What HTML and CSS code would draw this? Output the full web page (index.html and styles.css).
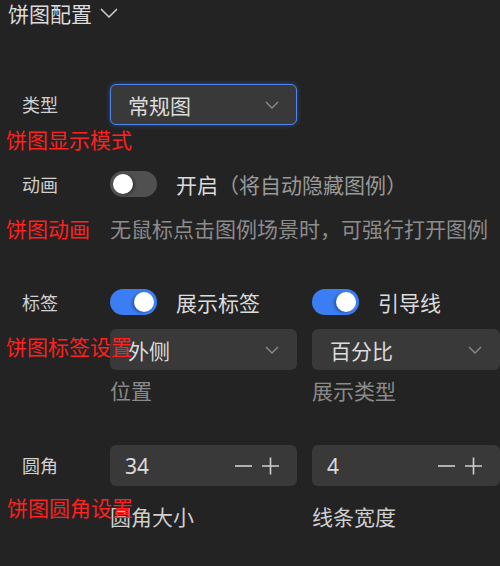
FILE: index.html
```html
<!DOCTYPE html>
<html lang="zh-CN">
<head>
<meta charset="utf-8">
<title>饼图配置</title>
<link rel="stylesheet" href="styles.css">
</head>
<body>
<div class="panel">
  <div class="header">
    <span class="title">饼图配置</span>
    <svg class="title-caret" width="18" height="10" viewBox="0 0 18 10"><path d="M1 1 L9 9 L17 1" fill="none" stroke="#cfcfcf" stroke-width="1.5"/></svg>
  </div>

  <div class="item item-type">
    <div class="label">类型</div>
    <div class="control">
      <div class="select select-focus">
        <span class="select-text">常规图</span>
        <svg class="caret" width="14" height="8" viewBox="0 0 14 8"><path d="M1 1 L7 7 L13 1" fill="none" stroke="#8a8a8a" stroke-width="1.4"/></svg>
      </div>
    </div>
    <div class="note note-type">饼图显示模式</div>
  </div>

  <div class="item item-anim">
    <div class="label">动画</div>
    <div class="control">
      <div class="switch-row">
        <span class="switch"><span class="knob"></span></span>
        <span class="switch-text">开启<span class="muted">（将自动隐藏图例）</span></span>
      </div>
      <div class="help">无鼠标点击图例场景时，可强行打开图例</div>
    </div>
    <div class="note note-anim">饼图动画</div>
  </div>

  <div class="item item-label">
    <div class="label">标签</div>
    <div class="control">
      <div class="cols">
        <div class="switch-row">
          <span class="switch on"><span class="knob"></span></span>
          <span class="switch-text">展示标签</span>
        </div>
        <div class="switch-row">
          <span class="switch on"><span class="knob"></span></span>
          <span class="switch-text">引导线</span>
        </div>
      </div>
      <div class="cols cols-fields">
        <div class="field">
          <div class="select">
            <span class="select-text">外侧</span>
            <svg class="caret" width="14" height="8" viewBox="0 0 14 8"><path d="M1 1 L7 7 L13 1" fill="none" stroke="#8a8a8a" stroke-width="1.4"/></svg>
          </div>
          <div class="caption dim">位置</div>
        </div>
        <div class="field">
          <div class="select">
            <span class="select-text">百分比</span>
            <svg class="caret" width="14" height="8" viewBox="0 0 14 8"><path d="M1 1 L7 7 L13 1" fill="none" stroke="#8a8a8a" stroke-width="1.4"/></svg>
          </div>
          <div class="caption dim">展示类型</div>
        </div>
      </div>
    </div>
    <div class="note note-label">饼图标签设置</div>
  </div>

  <div class="item item-radius">
    <div class="label">圆角</div>
    <div class="control">
      <div class="cols">
        <div class="field">
          <div class="number">
            <span class="num">34</span>
            <span class="steps">
              <svg width="18" height="18" viewBox="0 0 18 18"><path d="M0 9 H17" stroke="#d0d0d0" stroke-width="1.6"/></svg>
              <svg width="18" height="18" viewBox="0 0 18 18"><path d="M0 9 H17 M8.5 0.5 V17.5" stroke="#d0d0d0" stroke-width="1.6"/></svg>
            </span>
          </div>
          <div class="caption light">圆角大小</div>
        </div>
        <div class="field">
          <div class="number">
            <span class="num">4</span>
            <span class="steps">
              <svg width="18" height="18" viewBox="0 0 18 18"><path d="M0 9 H17" stroke="#d0d0d0" stroke-width="1.6"/></svg>
              <svg width="18" height="18" viewBox="0 0 18 18"><path d="M0 9 H17 M8.5 0.5 V17.5" stroke="#d0d0d0" stroke-width="1.6"/></svg>
            </span>
          </div>
          <div class="caption light">线条宽度</div>
        </div>
      </div>
    </div>
    <div class="note note-radius">饼图圆角设置</div>
  </div>
</div>
</body>
</html>
```
FILE: styles.css
```css
html, body {
  margin: 0;
  padding: 0;
  background: #232323;
}
body {
  width: 500px;
  height: 566px;
  overflow: hidden;
  font-family: "Noto Sans CJK SC", "Noto Sans", sans-serif;
  color: #d6d6d6;
}
.panel {
  display: flex;
  flex-direction: column;
}
.header {
  display: flex;
  align-items: center;
  gap: 8px;
  height: 26px;
  padding-left: 8px;
}
.title {
  font-size: 21px;
  line-height: 26px;
  color: #dcdcdc;
}
.item {
  position: relative;
  display: grid;
  grid-template-columns: 110px 1fr;
}
.item-type { margin-top: 58px; }
.item-anim { margin-top: 46px; }
.item-label { margin-top: 47px; }
.item-radius { margin-top: 41px; }

.label {
  padding-left: 22px;
  font-size: 18px;
  color: #d0d0d0;
  line-height: 41px;
}
.item-anim .label,
.item-label .label { line-height: 26px; }

.control {
  display: flex;
  flex-direction: column;
}
.select {
  box-sizing: border-box;
  width: 187px;
  height: 41px;
  background: #393939;
  border-radius: 6px;
  display: flex;
  align-items: center;
  justify-content: space-between;
  padding: 0 18px 0 18px;
}
.select-focus {
  border: 1px solid #4f86ee;
  box-shadow: 0 0 5px rgba(70, 130, 240, 0.45);
  padding: 0 17px 0 17px;
}
.select-text {
  font-size: 21px;
  color: #dcdcdc;
}
.caret { display: block; }

.switch-row {
  display: flex;
  align-items: center;
  height: 26px;
  gap: 19px;
}
.switch {
  position: relative;
  width: 47px;
  height: 26px;
  border-radius: 13px;
  background: #505050;
  flex: none;
}
.switch .knob {
  position: absolute;
  top: 3px;
  left: 3px;
  width: 20px;
  height: 20px;
  border-radius: 50%;
  background: #fff;
  box-shadow: 2px 1px 3px rgba(0, 0, 0, 0.35);
}
.switch.on { background: #3b7ef4; }
.switch.on .knob { left: 24px; box-shadow: -2px 1px 3px rgba(0, 0, 0, 0.3); }
.switch-text {
  font-size: 21px;
  color: #dcdcdc;
  white-space: nowrap;
}
.muted { color: #9a9a9a; }
.help {
  margin-top: 17px;
  font-size: 21px;
  line-height: 28px;
  color: #8c8c8c;
  white-space: nowrap;
}
.cols {
  display: grid;
  grid-template-columns: 187px 188px;
  column-gap: 15px;
}
.cols-fields { margin-top: 14px; }
.field .select { width: 100%; }
.caption {
  font-size: 21px;
  line-height: 28px;
  white-space: nowrap;
}
.item-label .caption { margin-top: 6px; }
.item-radius .caption { margin-top: 16px; }
.dim { color: #8a8a8a; }
.light { color: #cfcfcf; }

.number {
  box-sizing: border-box;
  height: 41px;
  background: #393939;
  border-radius: 6px;
  display: flex;
  align-items: center;
  justify-content: space-between;
  padding: 0 17px 0 15px;
}
.num {
  font-family: "Noto Sans", sans-serif;
  font-size: 21px;
  color: #dcdcdc;
}
.steps {
  display: flex;
  gap: 9px;
}
.steps svg { display: block; }

.note {
  position: absolute;
  left: 6px;
  font-size: 21px;
  line-height: 22px;
  color: #ff2020;
  white-space: nowrap;
}
.note-type { top: 44px; }
.note-anim { top: 46px; }
.note-label { top: 46px; }
.note-radius { top: 51px; left: 7px; }
```
